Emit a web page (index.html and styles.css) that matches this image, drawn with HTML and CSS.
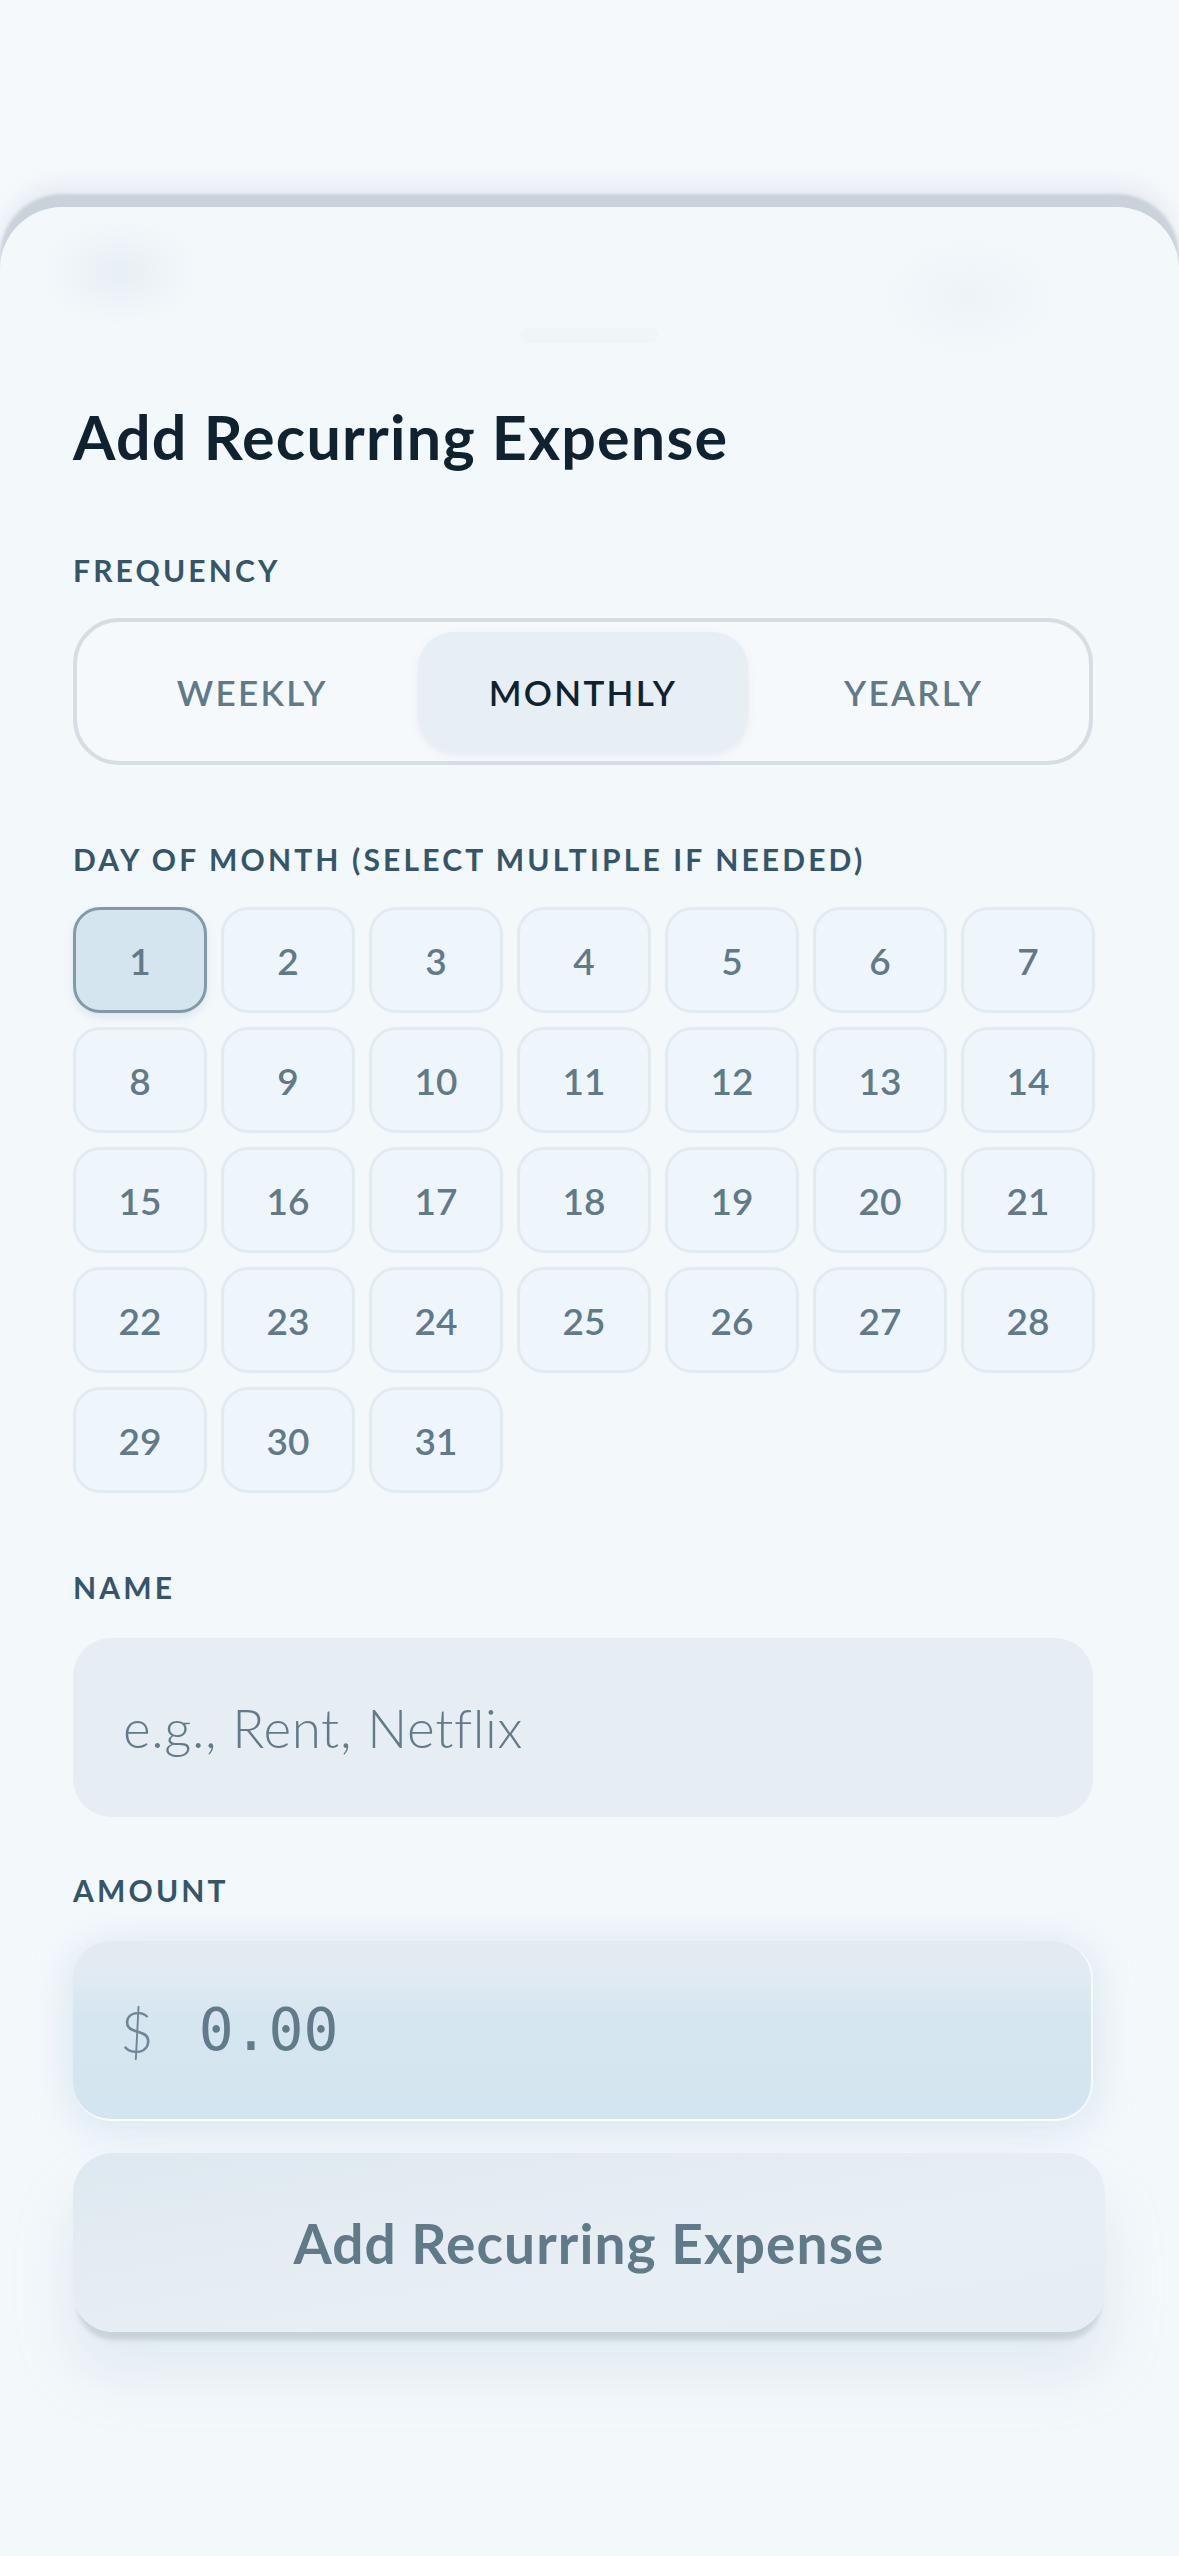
FILE: index.html
```html
<!DOCTYPE html>
<html lang="en">
<head>
<meta charset="utf-8">
<title>Add Recurring Expense</title>
<link rel="stylesheet" href="styles.css">
</head>
<body>
<div class="top"></div>
<section class="sheet">
  <div class="blob blob-left"></div>
  <div class="blob blob-right"></div>
  <div class="handle"></div>
  <h1 class="title">Add Recurring Expense</h1>

  <div class="label">FREQUENCY</div>
  <div class="segment">
    <button class="seg">WEEKLY</button>
    <button class="seg seg-active">MONTHLY</button>
    <button class="seg">YEARLY</button>
  </div>

  <div class="label label-day">DAY OF MONTH (SELECT MULTIPLE IF NEEDED)</div>
  <div class="days">
    <button class="day day-selected">1</button>
    <button class="day">2</button>
    <button class="day">3</button>
    <button class="day">4</button>
    <button class="day">5</button>
    <button class="day">6</button>
    <button class="day">7</button>
    <button class="day">8</button>
    <button class="day">9</button>
    <button class="day">10</button>
    <button class="day">11</button>
    <button class="day">12</button>
    <button class="day">13</button>
    <button class="day">14</button>
    <button class="day">15</button>
    <button class="day">16</button>
    <button class="day">17</button>
    <button class="day">18</button>
    <button class="day">19</button>
    <button class="day">20</button>
    <button class="day">21</button>
    <button class="day">22</button>
    <button class="day">23</button>
    <button class="day">24</button>
    <button class="day">25</button>
    <button class="day">26</button>
    <button class="day">27</button>
    <button class="day">28</button>
    <button class="day">29</button>
    <button class="day">30</button>
    <button class="day">31</button>
  </div>

  <div class="label label-name">NAME</div>
  <div class="field field-name">
    <input class="name-input" type="text" placeholder="e.g., Rent, Netflix">
  </div>

  <div class="label label-amount">AMOUNT</div>
  <div class="field field-amount">
    <span class="currency">$</span>
    <input class="amount-input" type="text" placeholder="0.00">
  </div>

  <button class="submit">Add Recurring Expense</button>
</section>
</body>
</html>
```

FILE: styles.css
```css
* {
  box-sizing: border-box;
  margin: 0;
  padding: 0;
}

html, body {
  background: #f5f9fc;
}

body {
  width: 1179px;
  height: 2556px;
  overflow: hidden;
  font-family: Lato, "Noto Sans", sans-serif;
}

.top {
  height: 207px;
}

.sheet {
  position: relative;
  height: 2349px;
  background: #f3f8fb;
  border-radius: 62px 62px 0 0;
  padding: 194px 86px 0 73px;
  box-shadow: 0 -13px 3px 0 rgba(160, 172, 184, 0.42), 0 -24px 18px 0 rgba(205, 216, 226, 0.35);
}

.blob {
  position: absolute;
  border-radius: 50%;
  pointer-events: none;
}

.blob-left {
  left: 40px;
  top: 10px;
  width: 160px;
  height: 110px;
  background: radial-gradient(closest-side, rgba(220, 230, 238, 0.5), rgba(220, 230, 238, 0));
}

.blob-right {
  right: 120px;
  top: 30px;
  width: 180px;
  height: 120px;
  background: radial-gradient(closest-side, rgba(225, 234, 241, 0.35), rgba(225, 234, 241, 0));
}

.handle {
  position: absolute;
  left: 519px;
  top: 121px;
  width: 139px;
  height: 15px;
  border-radius: 8px;
  background: rgba(238, 244, 249, 0.6);
}

.title {
  position: relative;
  font-size: 61px;
  line-height: 72px;
  font-weight: 700;
  color: #0f2230;
  letter-spacing: 0.02em;
}

.label {
  position: relative;
  font-size: 30px;
  line-height: 36px;
  font-weight: 700;
  letter-spacing: 0.105em;
  color: #34566a;
  margin-top: 79px;
}

.label-day {
  margin-top: 76px;
}

.label-name {
  margin-top: 76px;
}

.label-amount {
  margin-top: 55px;
}

.segment {
  margin-top: 30px;
  height: 147px;
  border: 4px solid #d6dee4;
  border-radius: 46px;
  background: #f6f9fc;
  padding: 10px;
  display: grid;
  grid-template-columns: 1fr 1fr 1fr;
}

.seg {
  border: none;
  background: transparent;
  border-radius: 36px;
  font-family: Lato, "Noto Sans", sans-serif;
  font-size: 35px;
  font-weight: 600;
  letter-spacing: 0.065em;
  color: #5f7a88;
}

.seg-active {
  background: #e7eef4;
  color: #0f2230;
  box-shadow: 0 4px 8px rgba(120, 140, 160, 0.12);
}

.days {
  margin-top: 30px;
  display: grid;
  grid-template-columns: repeat(7, 134px);
  grid-auto-rows: 106px;
  gap: 14px;
}

.day {
  border: 3px solid #e1ebf1;
  border-radius: 27px;
  background: #eef6fc;
  font-family: Lato, "Noto Sans", sans-serif;
  font-size: 37px;
  font-weight: 600;
  color: #5f7a88;
}

.day-selected {
  background: #d5e5ef;
  border-color: #7f9ba8;
  box-shadow: 0 4px 8px rgba(90, 120, 140, 0.14);
}

.field {
  margin-top: 33px;
  display: flex;
  align-items: center;
  border-radius: 38px;
}

.field-name {
  height: 179px;
  background: #e6edf3;
  padding-left: 50px;
}

.name-input,
.amount-input {
  border: none;
  outline: none;
  background: transparent;
  width: 100%;
  color: #5f7a88;
}

.name-input {
  font-family: Lato, "Noto Sans", sans-serif;
  font-size: 53px;
  font-weight: 300;
  letter-spacing: 0.012em;
}

.name-input::placeholder {
  color: #607b89;
  opacity: 1;
}

.field-amount {
  height: 180px;
  padding-left: 47px;
  background: linear-gradient(180deg, #e3ebf1 0%, #e2ebf2 18%, #d6e6f0 42%, #d3e5f0 100%);
  border-right: 2px solid rgba(255, 255, 255, 0.75);
  border-bottom: 2px solid rgba(255, 255, 255, 0.85);
  box-shadow: 0 6px 40px rgba(200, 220, 236, 0.7);
}

.currency {
  font-family: Lato, "Noto Sans", sans-serif;
  font-size: 58px;
  font-weight: 300;
  color: #6d8796;
  margin-right: 45px;
}

.amount-input {
  font-family: "DejaVu Sans Mono", "Liberation Mono", monospace;
  font-size: 58px;
}

.amount-input::placeholder {
  color: #607b89;
  opacity: 1;
}

.submit {
  display: block;
  margin-top: 32px;
  width: calc(100% + 12px);
  height: 179px;
  border: none;
  border-radius: 40px;
  background: linear-gradient(170deg, #dde8f0 0%, #e4ecf2 30%, #e7eef4 60%, #e6edf3 100%);
  font-family: Lato, "Noto Sans", sans-serif;
  font-size: 55px;
  font-weight: 700;
  letter-spacing: 0.02em;
  color: #5f7a88;
  box-shadow: 0 12px 4px -4px rgba(150, 162, 174, 0.35), 0 40px 60px rgba(160, 185, 205, 0.22);
}
```
